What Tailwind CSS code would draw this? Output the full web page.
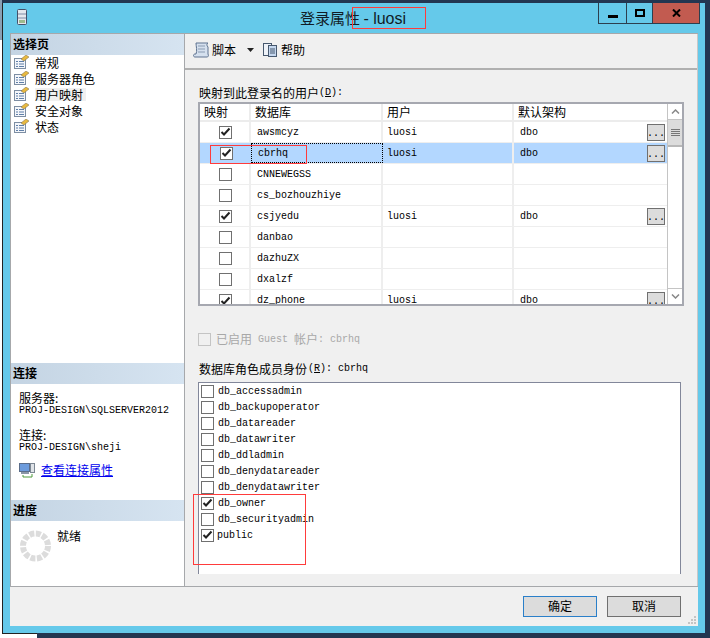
<!DOCTYPE html>
<html>

<head>
  <meta charset="UTF-8" />
  <title>登录属性 - luosi</title>
  <script src="https://cdn.jsdelivr.net/npm/@tailwindcss/browser@4"></script>
</head>

<body class="bg-[#233651]">
  <div class="relative w-[710px] h-[638px] overflow-hidden bg-[#233651] font-['Noto_Sans_CJK_SC',sans-serif] text-[12px] leading-[13px] text-black">
    <!-- desktop behind the window -->
    <div class="absolute left-0 top-0 w-[2px] h-[40px] bg-[#8aa0b4]"></div>
    <div class="absolute left-0 top-[40px] w-[2px] h-[598px] bg-white"></div>
    <div class="absolute left-0 top-[633px] w-[37px] h-[5px] bg-white"></div>
    <div class="absolute left-[2px] top-[632px] w-[35px] h-[2px] bg-[#222222]"></div>

    <!-- window -->
    <div class="relative ml-[2px] mt-[3px] w-[703px] h-[630px] border-l border-[#222222] bg-[#65c9ea] flex flex-col">
      <!-- title bar -->
      <div class="h-[30px] flex shrink-0 relative">
        <svg class="ml-[12px] mt-[5px]" width="14" height="18" viewBox="0 0 14 18">
          <rect x="2.5" y="1.5" width="9" height="15" rx="1" fill="#e4e8ee" stroke="#44506a" />
          <path d="M3 6h8M3 10h8" stroke="#7f8ca6" />
          <rect x="4" y="12" width="6" height="3" fill="#9dbb8d" />
        </svg>
        <div class="absolute left-[297px] top-[6px] text-[15px] leading-[18px] text-[#111c26] whitespace-nowrap">登录属性 <span class="font-['Liberation_Sans'] text-[16px]">- luosi</span></div>
        <div class="ml-auto mr-[5px] h-[21px] flex border border-t-0 border-[#2c3f4f]">
          <div class="w-[28px] border-r border-[#2c3f4f] flex items-center justify-center"><div class="w-[10px] h-[3px] bg-black mt-[6px]"></div></div>
          <div class="w-[26px] border-r border-[#2c3f4f] flex items-center justify-center"><div class="w-[10px] h-[8px] border-2 border-black"></div></div>
          <div class="w-[46px] bg-[#c25b50] flex items-center justify-center">
            <svg width="9" height="8" viewBox="0 0 9 8"><path d="M1 0.5 8 7.5M8 0.5 1 7.5" stroke="#000" stroke-width="2" /></svg>
          </div>
        </div>
      </div>

      <!-- client area -->
      <div class="ml-[7px] w-[688px] h-[593px] bg-[#f0f0f0] flex flex-col">
        <div class="flex h-[553px] border-t border-[#a6a8ab]">
          <!-- left pane -->
          <div class="w-[175px] shrink-0 bg-white border-l border-r border-[#a6a8ab] flex flex-col">
            <div class="h-[21px] pl-[2px] pb-[3px] flex items-center font-bold bg-gradient-to-r from-[#c4d4e3] to-[#d6e4f1]">选择页</div>
            <div class="pl-[3px] -mt-[1px] flex flex-col">
              <div class="h-[16px] flex items-center gap-[5px]"><svg width="16" height="14" viewBox="0 0 16 14"><rect x="0.5" y="3.5" width="11" height="10" fill="#f4f6fa" stroke="#7d8ea3" /><path d="M2 6.500h2M5 6.500h5M2 9h2M5 9h5M2 11.500h2M5 11.500h5" stroke="#5f7fa8" /><path d="M7 4l5-4 3 2-5 4z" fill="#e8b93f" stroke="#77694a" stroke-width=".5" /></svg><span>常规</span></div>
              <div class="h-[16px] flex items-center gap-[5px]"><svg width="16" height="14" viewBox="0 0 16 14"><rect x="0.5" y="3.5" width="11" height="10" fill="#f4f6fa" stroke="#7d8ea3" /><path d="M2 6.500h2M5 6.500h5M2 9h2M5 9h5M2 11.500h2M5 11.500h5" stroke="#5f7fa8" /><path d="M7 4l5-4 3 2-5 4z" fill="#e8b93f" stroke="#77694a" stroke-width=".5" /></svg><span>服务器角色</span></div>
              <div class="h-[16px] flex items-center gap-[5px]"><svg width="16" height="14" viewBox="0 0 16 14"><rect x="0.5" y="3.5" width="11" height="10" fill="#f4f6fa" stroke="#7d8ea3" /><path d="M2 6.500h2M5 6.500h5M2 9h2M5 9h5M2 11.500h2M5 11.500h5" stroke="#5f7fa8" /><path d="M7 4l5-4 3 2-5 4z" fill="#e8b93f" stroke="#77694a" stroke-width=".5" /></svg><span class="bg-[#f0f0f0] pr-[3px]">用户映射</span></div>
              <div class="h-[16px] flex items-center gap-[5px]"><svg width="16" height="14" viewBox="0 0 16 14"><rect x="0.5" y="3.5" width="11" height="10" fill="#f4f6fa" stroke="#7d8ea3" /><path d="M2 6.500h2M5 6.500h5M2 9h2M5 9h5M2 11.500h2M5 11.500h5" stroke="#5f7fa8" /><path d="M7 4l5-4 3 2-5 4z" fill="#e8b93f" stroke="#77694a" stroke-width=".5" /></svg><span>安全对象</span></div>
              <div class="h-[16px] flex items-center gap-[5px]"><svg width="16" height="14" viewBox="0 0 16 14"><rect x="0.5" y="3.5" width="11" height="10" fill="#f4f6fa" stroke="#7d8ea3" /><path d="M2 6.500h2M5 6.500h5M2 9h2M5 9h5M2 11.500h2M5 11.500h5" stroke="#5f7fa8" /><path d="M7 4l5-4 3 2-5 4z" fill="#e8b93f" stroke="#77694a" stroke-width=".5" /></svg><span>状态</span></div>
            </div>

            <div class="mt-[229px] h-[21px] pl-[2px] pb-[3px] flex items-center font-bold bg-gradient-to-r from-[#c4d4e3] to-[#d6e4f1]">连接</div>
            <div class="pl-[8px] pt-[7px]">
              <div class="h-[13px]">服务器:</div>
              <div class="h-[13px] font-['Liberation_Mono'] text-[10px]">PROJ-DESIGN\SQLSERVER2012</div>
              <div class="h-[13px] mt-[11px]">连接:</div>
              <div class="h-[13px] font-['Liberation_Mono'] text-[10px]">PROJ-DESIGN\sheji</div>
            </div>
            <div class="pl-[8px] mt-[8px] h-[16px] flex items-center gap-[6px]">
              <svg width="16" height="16" viewBox="0 0 16 16">
                <rect x="0.5" y="1.5" width="10" height="8" fill="#6c9bdc" stroke="#5a6d8a" />
                <rect x="11.5" y="1.5" width="4" height="9" fill="#dfe3e8" stroke="#7c8793" />
                <path d="M2 11h8" stroke="#8a96a6" stroke-width="2" />
                <path d="M4 13v2h9v-3" fill="none" stroke="#4f9a3d" />
              </svg>
              <a class="text-[#0000ee] underline leading-[14px]">查看连接属性</a>
            </div>

            <div class="mt-[22px] h-[21px] pl-[2px] pb-[3px] flex items-center font-bold bg-gradient-to-r from-[#c4d4e3] to-[#d6e4f1]">进度</div>
            <div class="pl-[9px] pt-[8px] flex items-start gap-[5px]">
              <svg class="mt-[1px]" width="32" height="32" viewBox="0 0 32 32"><circle cx="15.500" cy="16" r="12.500" fill="none" stroke="#dcdcdc" stroke-width="6" stroke-dasharray="5 1.54" /></svg>
              <span>就绪</span>
            </div>
          </div>

          <!-- right pane -->
          <div class="flex-1 min-w-0 flex flex-col border-r border-[#c8c8c8]">
            <div class="h-[36px] shrink-0 border-b-2 border-[#b0b0b0] pl-[7px] pb-[2px] flex items-center">
              <svg width="18" height="18" viewBox="0 0 18 18"><path d="M4 2h12c-1.5 1-1.5 2.500 0 4v7c1 2 0 3-1 3H3C1 16 1 13 3 13h1c1.500-3 0-8 0-11z" fill="#d5e0ee" stroke="#5e7390" /><path d="M6 5h7M6 8h7M6 11h7" stroke="#8a9bb2" /></svg>
              <span class="ml-[2px] pb-[2px]">脚本</span>
              <svg class="ml-[11px]" width="7" height="4" viewBox="0 0 7 4"><path d="M0 0h7L3.500 4z" fill="#222" /></svg>
              <div class="ml-[8px] flex items-center gap-[3px]">
                <svg width="16" height="16" viewBox="0 0 16 16"><rect x="1.500" y="1.500" width="8" height="12" fill="#eef2f8" stroke="#47586e" /><rect x="6.500" y="3.500" width="8" height="11" fill="#c5d7ee" stroke="#47586e" /><path d="M8 7h5M8 9h5M8 11h5" stroke="#47586e" /></svg>
                <span class="pb-[2px]">帮助</span>
              </div>
            </div>

            <div class="pl-[13px] pt-[15px]">
              <div class="h-[14px] flex items-center pl-[1px]">映射到此登录名的用户<span class="font-['Liberation_Mono'] text-[10px]">(<u>D</u>):</span></div>

              <!-- users grid -->
              <div class="mt-[3px] w-[486px] h-[204px] border-2 border-[#a6a8b0] bg-white flex overflow-hidden">
                <div class="w-[467px] shrink-0 flex flex-col">
                  <div class="h-[18px] shrink-0 flex border-b-2 border-[#ececec]">
                    <div class="w-[51px] pl-[4px] pb-[2px] border-r-2 border-[#ececec] flex items-center">映射</div>
                    <div class="w-[132px] pl-[4px] pb-[2px] border-r-2 border-[#ececec] flex items-center">数据库</div>
                    <div class="w-[131px] pl-[4px] pb-[2px] border-r-2 border-[#ececec] flex items-center">用户</div>
                    <div class="flex-1 pl-[4px] pb-[2px] flex items-center">默认架构</div>
                  </div>

                  <div class="h-[21px] shrink-0 flex items-center border-b border-[#eeeeee] font-['Liberation_Mono'] text-[10px]">
                    <div class="w-[51px] pl-[2px] h-full flex items-center justify-center border-r-2 border-[#eeeeee]"><div class="w-[13px] h-[13px] border border-[#707070] bg-white flex items-center justify-center"><svg width="11" height="10" viewBox="0 0 11 10"><path d="M1.500 5 4 7.500 9.500 1.500" fill="none" stroke="#222" stroke-width="2" /></svg></div></div>
                    <div class="w-[132px] pl-[6px] border-r-2 border-[#eeeeee] h-full flex items-center">awsmcyz</div>
                    <div class="w-[131px] pl-[4px] border-r-2 border-[#eeeeee] h-full flex items-center">luosi</div>
                    <div class="flex-1 pl-[6px] h-full flex items-center justify-between pr-[2px]">dbo<div class="w-[18px] h-[17px] bg-[#dcdcdc] border border-[#707070] flex items-end justify-center leading-[12px]">...</div></div>
                  </div>
                  <div class="h-[21px] shrink-0 flex items-center bg-[#b3d7ff] border-b border-[#eeeeee] font-['Liberation_Mono'] text-[10px]">
                    <div class="w-[51px] pl-[2px] h-full flex items-center justify-center"><div class="w-[13px] h-[13px] border border-[#707070] bg-white flex items-center justify-center"><svg width="11" height="10" viewBox="0 0 11 10"><path d="M1.500 5 4 7.500 9.500 1.500" fill="none" stroke="#222" stroke-width="2" /></svg></div></div>
                    <div class="w-[132px] pl-[6px] h-full flex items-center border border-dotted border-black">cbrhq</div>
                    <div class="w-[131px] pl-[4px] border-r-2 border-[#eeeeee] h-full flex items-center">luosi</div>
                    <div class="flex-1 pl-[6px] h-full flex items-center justify-between pr-[2px]">dbo<div class="w-[18px] h-[17px] bg-[#dcdcdc] border border-[#707070] flex items-end justify-center leading-[12px]">...</div></div>
                  </div>
                  <div class="h-[21px] shrink-0 flex items-center border-b border-[#eeeeee] font-['Liberation_Mono'] text-[10px]">
                    <div class="w-[51px] pl-[2px] h-full flex items-center justify-center border-r-2 border-[#eeeeee]"><div class="w-[13px] h-[13px] border border-[#707070] bg-white"></div></div>
                    <div class="w-[132px] pl-[6px] border-r-2 border-[#eeeeee] h-full flex items-center">CNNEWEGSS</div>
                    <div class="w-[131px] border-r-2 border-[#eeeeee] h-full"></div>
                  </div>
                  <div class="h-[21px] shrink-0 flex items-center border-b border-[#eeeeee] font-['Liberation_Mono'] text-[10px]">
                    <div class="w-[51px] pl-[2px] h-full flex items-center justify-center border-r-2 border-[#eeeeee]"><div class="w-[13px] h-[13px] border border-[#707070] bg-white"></div></div>
                    <div class="w-[132px] pl-[6px] border-r-2 border-[#eeeeee] h-full flex items-center">cs_bozhouzhiye</div>
                    <div class="w-[131px] border-r-2 border-[#eeeeee] h-full"></div>
                  </div>
                  <div class="h-[21px] shrink-0 flex items-center border-b border-[#eeeeee] font-['Liberation_Mono'] text-[10px]">
                    <div class="w-[51px] pl-[2px] h-full flex items-center justify-center border-r-2 border-[#eeeeee]"><div class="w-[13px] h-[13px] border border-[#707070] bg-white flex items-center justify-center"><svg width="11" height="10" viewBox="0 0 11 10"><path d="M1.500 5 4 7.500 9.500 1.500" fill="none" stroke="#222" stroke-width="2" /></svg></div></div>
                    <div class="w-[132px] pl-[6px] border-r-2 border-[#eeeeee] h-full flex items-center">csjyedu</div>
                    <div class="w-[131px] pl-[4px] border-r-2 border-[#eeeeee] h-full flex items-center">luosi</div>
                    <div class="flex-1 pl-[6px] h-full flex items-center justify-between pr-[2px]">dbo<div class="w-[18px] h-[17px] bg-[#dcdcdc] border border-[#707070] flex items-end justify-center leading-[12px]">...</div></div>
                  </div>
                  <div class="h-[21px] shrink-0 flex items-center border-b border-[#eeeeee] font-['Liberation_Mono'] text-[10px]">
                    <div class="w-[51px] pl-[2px] h-full flex items-center justify-center border-r-2 border-[#eeeeee]"><div class="w-[13px] h-[13px] border border-[#707070] bg-white"></div></div>
                    <div class="w-[132px] pl-[6px] border-r-2 border-[#eeeeee] h-full flex items-center">danbao</div>
                    <div class="w-[131px] border-r-2 border-[#eeeeee] h-full"></div>
                  </div>
                  <div class="h-[21px] shrink-0 flex items-center border-b border-[#eeeeee] font-['Liberation_Mono'] text-[10px]">
                    <div class="w-[51px] pl-[2px] h-full flex items-center justify-center border-r-2 border-[#eeeeee]"><div class="w-[13px] h-[13px] border border-[#707070] bg-white"></div></div>
                    <div class="w-[132px] pl-[6px] border-r-2 border-[#eeeeee] h-full flex items-center">dazhuZX</div>
                    <div class="w-[131px] border-r-2 border-[#eeeeee] h-full"></div>
                  </div>
                  <div class="h-[21px] shrink-0 flex items-center border-b border-[#eeeeee] font-['Liberation_Mono'] text-[10px]">
                    <div class="w-[51px] pl-[2px] h-full flex items-center justify-center border-r-2 border-[#eeeeee]"><div class="w-[13px] h-[13px] border border-[#707070] bg-white"></div></div>
                    <div class="w-[132px] pl-[6px] border-r-2 border-[#eeeeee] h-full flex items-center">dxalzf</div>
                    <div class="w-[131px] border-r-2 border-[#eeeeee] h-full"></div>
                  </div>
                  <div class="h-[21px] shrink-0 flex items-center font-['Liberation_Mono'] text-[10px]">
                    <div class="w-[51px] pl-[2px] h-full flex items-center justify-center border-r-2 border-[#eeeeee]"><div class="w-[13px] h-[13px] border border-[#707070] bg-white flex items-center justify-center"><svg width="11" height="10" viewBox="0 0 11 10"><path d="M1.500 5 4 7.500 9.500 1.500" fill="none" stroke="#222" stroke-width="2" /></svg></div></div>
                    <div class="w-[132px] pl-[6px] border-r-2 border-[#eeeeee] h-full flex items-center">dz_phone</div>
                    <div class="w-[131px] pl-[4px] border-r-2 border-[#eeeeee] h-full flex items-center">luosi</div>
                    <div class="flex-1 pl-[6px] h-full flex items-center justify-between pr-[2px]">dbo<div class="w-[18px] h-[17px] bg-[#dcdcdc] border border-[#707070] flex items-end justify-center leading-[12px]">...</div></div>
                  </div>
                </div>

                <!-- scrollbar -->
                <div class="flex-1 flex flex-col border-l border-[#c4c4c4]">
                  <div class="h-[16px] flex items-center justify-center border-b border-[#c4c4c4]"><svg width="9" height="5" viewBox="0 0 9 5"><path d="M1 4.500 4.500 1 8 4.500" fill="none" stroke="#888" stroke-width="1.500" /></svg></div>
                  <div class="h-[27px] bg-[#dcdcdc] border-b-2 border-[#b8b8b8] flex flex-col items-center justify-center gap-[1px]">
                    <div class="w-[9px] h-[1px] bg-[#777]"></div><div class="w-[9px] h-[1px] bg-[#777]"></div><div class="w-[9px] h-[1px] bg-[#777]"></div><div class="w-[9px] h-[1px] bg-[#777]"></div>
                  </div>
                  <div class="flex-1"></div>
                  <div class="h-[16px] flex items-center justify-center border-t border-[#c4c4c4]"><svg width="9" height="5" viewBox="0 0 9 5"><path d="M1 .5 4.500 4 8 .5" fill="none" stroke="#888" stroke-width="1.500" /></svg></div>
                </div>
              </div>

              <!-- guest -->
              <div class="mt-[26px] h-[14px] flex items-center text-[#a8a8a8]">
                <div class="w-[13px] h-[13px] border border-[#c4c4c4] mr-[5px]"></div>
                <span class="pb-[1px]">已启用</span><span class="ml-[6px] font-['Liberation_Mono'] text-[10px]">Guest</span><span class="ml-[6px] pb-[1px]">帐户</span><span class="font-['Liberation_Mono'] text-[10px]">: cbrhq</span>
              </div>

              <div class="mt-[15px] h-[14px] flex items-center pl-[1px]">数据库角色成员身份<span class="ml-[1px] font-['Liberation_Mono'] text-[10px] whitespace-pre">(<u>R</u>): cbrhq</span></div>

              <!-- roles list -->
              <div class="mt-[7px] w-[483px] h-[192px] border border-b-0 border-[#82879a] bg-white pl-[2px] font-['Liberation_Mono'] text-[10px]">
                <div class="h-[16px] flex items-center gap-[4px]"><div class="w-[13px] h-[13px] border border-[#707070]"></div>db_accessadmin</div>
                <div class="h-[16px] flex items-center gap-[4px]"><div class="w-[13px] h-[13px] border border-[#707070]"></div>db_backupoperator</div>
                <div class="h-[16px] flex items-center gap-[4px]"><div class="w-[13px] h-[13px] border border-[#707070]"></div>db_datareader</div>
                <div class="h-[16px] flex items-center gap-[4px]"><div class="w-[13px] h-[13px] border border-[#707070]"></div>db_datawriter</div>
                <div class="h-[16px] flex items-center gap-[4px]"><div class="w-[13px] h-[13px] border border-[#707070]"></div>db_ddladmin</div>
                <div class="h-[16px] flex items-center gap-[4px]"><div class="w-[13px] h-[13px] border border-[#707070]"></div>db_denydatareader</div>
                <div class="h-[16px] flex items-center gap-[4px]"><div class="w-[13px] h-[13px] border border-[#707070]"></div>db_denydatawriter</div>
                <div class="h-[16px] flex items-center gap-[4px]"><div class="w-[13px] h-[13px] border border-[#707070] flex items-center justify-center"><svg width="11" height="10" viewBox="0 0 11 10"><path d="M1.500 5 4 7.500 9.500 1.500" fill="none" stroke="#222" stroke-width="2" /></svg></div>db_owner</div>
                <div class="h-[16px] flex items-center gap-[4px]"><div class="w-[13px] h-[13px] border border-[#707070]"></div>db_securityadmin</div>
                <div class="h-[16px] flex items-center gap-[3px]"><div class="w-[13px] h-[13px] border border-[#707070] flex items-center justify-center"><svg width="11" height="10" viewBox="0 0 11 10"><path d="M1.500 5 4 7.500 9.500 1.500" fill="none" stroke="#222" stroke-width="2" /></svg></div>public</div>
              </div>
            </div>
          </div>
        </div>

        <!-- footer -->
        <div class="flex-1 border-t border-[#a6a8ab] relative flex justify-end items-start pt-[9px] pr-[17px] gap-[10px]">
          <button class="w-[74px] h-[21px] pb-[2px] bg-[#dcdcdc] border border-[#2a7fc9] flex items-center justify-center">确定</button>
          <button class="w-[74px] h-[21px] pb-[2px] bg-[#dcdcdc] border border-[#707070] flex items-center justify-center">取消</button>
          <svg class="absolute right-[2px] bottom-[2px]" width="8" height="8" viewBox="0 0 8 8"><path d="M6 0h2v2H6zM3 3h2v2H3zM6 3h2v2H6zM0 6h2v2H0zM3 6h2v2H3zM6 6h2v2H6z" fill="#c4c4c4" /></svg>
        </div>
      </div>
    </div>

    <!-- red annotation boxes drawn over the screenshot -->
    <div class="absolute left-[352px] top-[7px] w-[74px] h-[22px] border border-[#ff3b3b]"></div>
    <div class="absolute left-[210px] top-[145px] w-[97px] h-[19px] border border-[#ff3b3b]"></div>
    <div class="absolute left-[193px] top-[494px] w-[113px] h-[71px] border border-[#ff3b3b]"></div>
  </div>
</body>

</html>
